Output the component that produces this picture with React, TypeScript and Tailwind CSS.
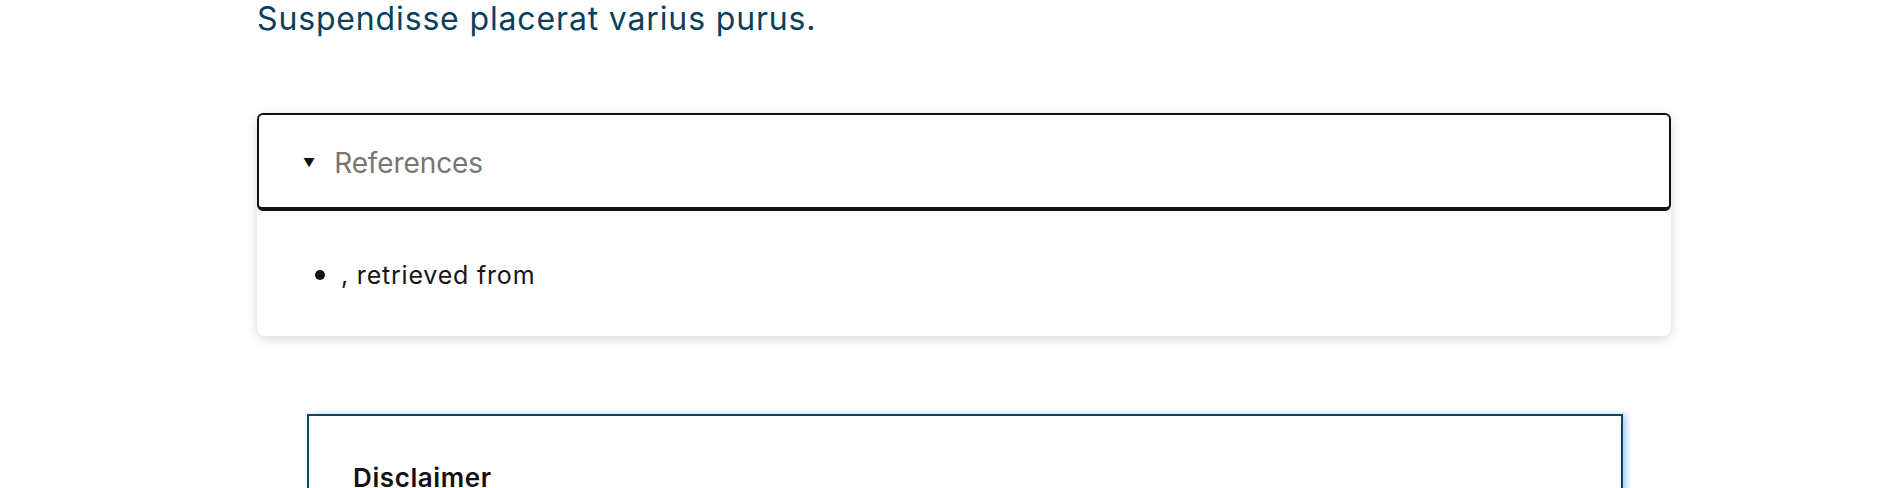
import { FC } from "react";

const App: FC = () => {
  return (
    <div className="min-h-[488px] w-full bg-white overflow-hidden font-['Inter',sans-serif]">
      <div className="ml-[257px] w-[1414px]">
        {/* Lead paragraph */}
        <p className="text-[32px] leading-[38px] text-[#0b3f5c] tracking-[0.85px]">
          Suspendisse placerat varius purus.
        </p>

        {/* References accordion */}
        <div className="mt-[75px] rounded-lg bg-white shadow-[0_3px_12px_rgba(0,0,0,0.16)]">
          <div className="flex h-[98px] items-center rounded-md border-2 border-b-4 border-[#111111] bg-white pl-[44px] pt-[3px]">
            <span className="text-[12px] leading-none text-[#111111]">▼</span>
            <span className="ml-[19px] text-[28px] text-[#7a7570] tracking-[-0.1px]">
              References
            </span>
          </div>
          <ul className="list-disc pl-[84px] pt-[45px] pb-[44px] text-[25px] leading-[34px] text-[#161616] tracking-[0.8px] marker:text-[30px]">
            <li>, retrieved from</li>
          </ul>
        </div>

        {/* Disclaimer */}
        <div className="mt-[78px] ml-[50px] mr-[48px] border-2 border-[#0b4a5e] px-[44px] pt-[46px] pb-[40px] shadow-[4px_0_6px_rgba(90,150,255,0.45)]">
          <h3 className="text-[26px] leading-[32px] font-semibold text-[#111111] tracking-[0.6px]">
            Disclaimer
          </h3>
          <p className="mt-4 text-[18px] text-[#222]">
            The information provided is for general informational purposes only.
          </p>
        </div>
      </div>
    </div>
  );
};

export default App;
